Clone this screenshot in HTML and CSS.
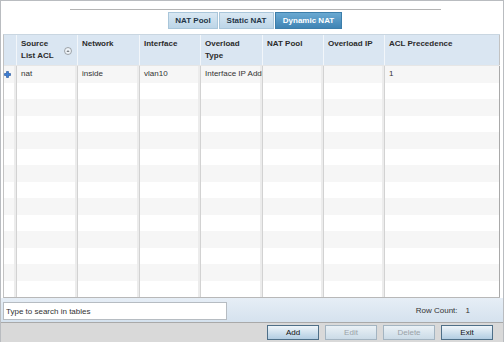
FILE: index.html
```html
<!DOCTYPE html>
<html lang="en">

<head>
    <meta charset="utf-8">
    <title>Dynamic NAT</title>
    <link rel="stylesheet" href="styles.css">
</head>

<body>
    <div class="vindue">
        <div class="top">
            <div class="linje"></div>
            <nav class="faner">
                <button class="fane">NAT Pool</button>
                <button class="fane">Static NAT</button>
                <button class="fane valgt">Dynamic NAT</button>
            </nav>
        </div>

        <section class="tabel">
            <div class="raekke hoved">
                <div class="celle"></div>
                <div class="celle sorter">
                    <span>Source<br>List ACL</span>
                    <svg class="sortikon" width="8" height="8" viewBox="0 0 8 8">
                        <circle cx="4" cy="4" r="3.5" fill="#eef3f8" stroke="#8a8f94" stroke-width="0.8"/>
                        <path d="M2.4 5 L4 3 L5.6 5 Z" fill="#7a7f84"/>
                    </svg>
                </div>
                <div class="celle">Network</div>
                <div class="celle">Interface</div>
                <div class="celle">Overload<br>Type</div>
                <div class="celle">NAT Pool</div>
                <div class="celle">Overload IP</div>
                <div class="celle">ACL Precedence</div>
            </div>

            <div class="krop">
                <div class="raekke data">
                    <div class="celle plus">
                        <svg width="7" height="7" viewBox="0 0 7 7">
                            <path d="M2.5 0.5 H4.5 V2.5 H6.5 V4.5 H4.5 V6.5 H2.5 V4.5 H0.5 V2.5 H2.5 Z" fill="#3d7fd6" stroke="#1d4f99" stroke-width="0.6"/>
                        </svg>
                    </div>
                    <div class="celle">nat</div>
                    <div class="celle">inside</div>
                    <div class="celle">vlan10</div>
                    <div class="celle">Interface IP Address</div>
                    <div class="celle"></div>
                    <div class="celle"></div>
                    <div class="celle">1</div>
                </div>
            </div>
        </section>

        <div class="bund">
            <input class="soeg" type="text" placeholder="Type to search in tables">
            <div class="antal">Row Count:<span class="tal">1</span></div>
        </div>

        <div class="knapper">
            <button class="knap">Add</button>
            <button class="knap" disabled>Edit</button>
            <button class="knap" disabled>Delete</button>
            <button class="knap">Exit</button>
        </div>
    </div>

    <script>
        const krop = document.querySelector(".krop");
        for (let i = 1; i < 14; i++) {
            const r = document.createElement("div");
            r.className = "raekke data";
            for (let j = 0; j < 8; j++) {
                const c = document.createElement("div");
                c.className = "celle";
                r.appendChild(c);
            }
            krop.appendChild(r);
        }
    </script>
</body>

</html>
```

FILE: styles.css
```css
* {
    margin: 0;
    padding: 0;
    box-sizing: border-box;
}

body {
    font-family: "Liberation Sans", Arial, sans-serif;
    font-size: 8px;
    color: #333;
    background: #fff;
}

.vindue {
    width: 504px;
    height: 342px;
    border: 1px solid #b9bcc0;
    border-bottom: none;
    display: flex;
    flex-direction: column;
    overflow: hidden;
}

.top {
    height: 33px;
    padding-top: 8px;
}

.linje {
    margin-left: 69px;
    width: 371px;
    height: 1px;
    background: #b4b4b4;
}

.faner {
    display: flex;
    gap: 1px;
    margin-top: 2px;
    padding-left: 167px;
}

.fane {
    height: 17px;
    font-family: inherit;
    font-size: 8px;
    font-weight: bold;
    color: #1f3547;
    border: 1px solid #a9c6da;
    background: linear-gradient(#d9e8f3, #bcd5e7);
    width: 50px;
}

.fane:nth-child(2) {
    width: 55px;
}

.fane.valgt {
    width: 67px;
    color: #fff;
    border-color: #3c7eaa;
    background: linear-gradient(#6aa9d2, #3f84b4);
}

.tabel {
    margin-left: 2px;
    width: 497px;
    border-left: 1px solid #c2c2c2;
    border-bottom: 1px solid #b8b8b8;
    border-top: 1px solid #c9d6e1;
}

.raekke {
    display: grid;
    grid-template-columns: 13px 61px 62px 61px 62px 61px 61px 115px;
}

.celle {
    border-right: 1px solid #d2d2d2;
    padding-left: 4px;
    overflow: hidden;
    white-space: nowrap;
}

.hoved {
    height: 30px;
    background: #dae6f2;
    font-weight: bold;
    color: #2b2b2b;
}

.hoved .celle {
    border-right: 1px solid #f2f6fa;
    padding-top: 3px;
    line-height: 12px;
}

.hoved .celle:last-child {
    border-right-color: #c2c2c2;
}

.sorter {
    display: flex;
    justify-content: space-between;
    padding-right: 5px;
}

.sortikon {
    align-self: center;
    margin-top: -2px;
}

.krop {
    height: 232px;
    display: grid;
    grid-template-rows: repeat(14, 1fr);
    border-top: 1px solid #e6e6e6;
}

.data {
    line-height: 16px;
}

.data:nth-child(odd) {
    background: #f6f6f6;
}

.data .celle {
    box-shadow: inset -2px 0 0 #ececec;
}

.data .celle:last-child {
    border-right-color: #a9a9a9;
    box-shadow: none;
}

.plus {
    padding-left: 0;
    display: flex;
    align-items: center;
}

.bund {
    height: 24px;
    display: flex;
    align-items: flex-start;
    padding: 4px 0 0 2px;
    background: linear-gradient(#e6eef6, #d5e2ee);
}

.soeg {
    width: 224px;
    height: 18px;
    border: 1px solid #b6bcc2;
    padding-left: 2px;
    font-family: inherit;
    font-size: 8px;
    color: #333;
}

.soeg::placeholder {
    color: #333;
}

.antal {
    margin-left: auto;
    padding-right: 33px;
    line-height: 18px;
    color: #333;
}

.tal {
    margin-left: 8px;
}

.knapper {
    flex: 1;
    display: flex;
    justify-content: flex-end;
    gap: 6px;
    padding: 2px 10px 0 0;
    background: #d9d9d9;
    border-top: 1px solid #a9a9a9;
}

.knap {
    width: 52px;
    height: 15px;
    font-family: inherit;
    font-size: 8px;
    color: #111;
    border: 1px solid #4e6f88;
    background: linear-gradient(#eef5fa, #b2cde2);
}

.knap:disabled {
    color: #9aa2a8;
    border-color: #a3b4c1;
    background: linear-gradient(#eaf1f6, #cbdbe7);
}
```
